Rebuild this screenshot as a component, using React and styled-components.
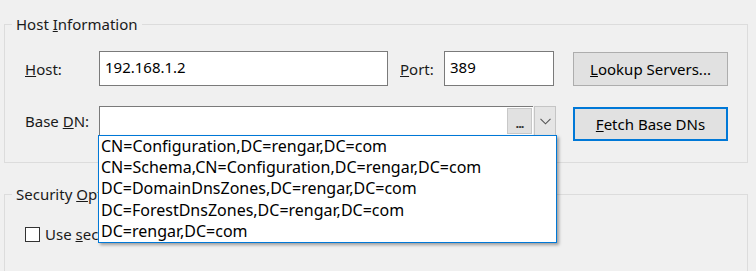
import styled, { createGlobalStyle } from "styled-components";

const GlobalStyle = createGlobalStyle`
    html, body {
        margin: 0;
        background: #f0f0f0;
    }
    body {
        font-family: "Noto Sans", "Open Sans", sans-serif;
        font-size: 15px;
        color: #000;
    }
`;

const baseDns = [
    "CN=Configuration,DC=rengar,DC=com",
    "CN=Schema,CN=Configuration,DC=rengar,DC=com",
    "DC=DomainDnsZones,DC=rengar,DC=com",
    "DC=ForestDnsZones,DC=rengar,DC=com",
    "DC=rengar,DC=com",
];

const Key = ({ text, at = 0 }) => (
    <>
        {text.slice(0, at)}
        <u>{text[at]}</u>
        {text.slice(at + 1)}
    </>
);

const App = () => {
    return (
        <>
            <GlobalStyle />
            <Dialog>
                <Group>
                    <Legend>
                        Host <Key text="Information" />
                    </Legend>
                    <GroupBody $top={17} $bottom={21}>
                        <Row>
                            <Label>
                                <Key text="Host:" />
                            </Label>
                            <TextBox $width={289} readOnly value="192.168.1.2" />
                            <Label $width={44} $gap={12}>
                                <Key text="Port:" />
                            </Label>
                            <TextBox $width={110} readOnly value="389" />
                            <Button $gap={19}>
                                <Key text="Lookup Servers..." />
                            </Button>
                        </Row>
                        <Row $align="flex-start">
                            <Label $height={30}>
                                Base <Key text="DN:" />
                            </Label>
                            <Combo>
                                <ComboField>
                                    <BrowseButton>...</BrowseButton>
                                </ComboField>
                                <ArrowButton>
                                    <svg width="11" height="7" viewBox="0 0 11 7">
                                        <path
                                            d="M0.5 0.8 L5.5 5.8 L10.5 0.8"
                                            fill="none"
                                            stroke="#555"
                                            strokeWidth="1.1"
                                        />
                                    </svg>
                                </ArrowButton>
                                <DropList>
                                    {baseDns.map((dn) => (
                                        <DropItem key={dn}>{dn}</DropItem>
                                    ))}
                                </DropList>
                            </Combo>
                            <Button $gap={17} $focused>
                                <Key text="Fetch Base DNs" />
                            </Button>
                        </Row>
                    </GroupBody>
                </Group>
                <Group $gap={21} $open>
                    <Legend>
                        Security <Key text="Options" />
                    </Legend>
                    <GroupBody $top={20} $bottom={40}>
                        <CheckRow>
                            <CheckBox />
                            <span>
                                Use <Key text="secure connection (SSL)" />
                            </span>
                        </CheckRow>
                    </GroupBody>
                </Group>
            </Dialog>
        </>
    );
};

const Dialog = styled.div`
    padding: 14px 8px 0 4px;
    height: 271px;
    box-sizing: border-box;
    overflow: hidden;
`;

const Group = styled.fieldset`
    margin: ${(p) => p.$gap || 0}px 0 0 0;
    padding: 0;
    border: 1px solid #dcdcdc;
    min-width: 0;
    ${(p) => p.$open && "height: 120px;"}
`;

const Legend = styled.legend`
    margin-left: 7px;
    padding: 0 4px;
    line-height: 20px;
    color: #1a1a1a;
`;

const GroupBody = styled.div`
    padding: ${(p) => p.$top}px 0 ${(p) => p.$bottom}px 20px;
    display: flex;
    flex-direction: column;
    gap: 20px;
`;

const Row = styled.div`
    display: flex;
    align-items: ${(p) => p.$align || "center"};
`;

const Label = styled.label`
    width: ${(p) => p.$width || 74}px;
    margin-left: ${(p) => p.$gap || 0}px;
    flex-shrink: 0;
    white-space: nowrap;
    line-height: ${(p) => p.$height || 20}px;
    color: #1a1a1a;
`;

const TextBox = styled.input`
    width: ${(p) => p.$width}px;
    height: 35px;
    box-sizing: border-box;
    border: 1px solid #7a7a7a;
    background: #fff;
    padding: 0 5px 3px;
    font: inherit;
    color: #000;
    outline: none;
`;

const Button = styled.button`
    margin-left: ${(p) => p.$gap}px;
    margin-top: ${(p) => (p.$focused ? 1 : 0)}px;
    width: 155px;
    height: 34px;
    box-sizing: border-box;
    background: #e1e1e1;
    border: ${(p) => (p.$focused ? "2px solid #0078d7" : "1px solid #adadad")};
    font: inherit;
    color: #000;
    padding: 0;
`;

const Combo = styled.div`
    position: relative;
    display: flex;
    width: 457px;
    height: 30px;
`;

const ComboField = styled.div`
    flex: 1;
    box-sizing: border-box;
    border: 1px solid #7a7a7a;
    border-right: none;
    background: #fff;
    display: flex;
    justify-content: flex-end;
    align-items: center;
    padding-right: 1px;
`;

const BrowseButton = styled.div`
    width: 25px;
    height: 26px;
    box-sizing: border-box;
    border: 1px solid #c8c8c8;
    background: #e1e1e1;
    font-size: 13px;
    font-weight: bold;
    line-height: 28px;
    text-align: center;
    letter-spacing: -1px;
    color: #333;
`;

const ArrowButton = styled.div`
    width: 22px;
    box-sizing: border-box;
    margin-left: 1px;
    border: 1px solid #c5c5c5;
    background: #e5e5e5;
    display: flex;
    align-items: center;
    justify-content: center;
`;

const DropList = styled.ul`
    position: absolute;
    top: 29px;
    left: -1px;
    width: 459px;
    box-sizing: border-box;
    margin: 0;
    padding: 0;
    list-style: none;
    background: #fff;
    border: 1px solid #0078d7;
    box-shadow: 2px 2px 3px rgba(0, 0, 0, 0.35);
    z-index: 2;
`;

const DropItem = styled.li`
    padding-left: 2px;
    font-size: 16px;
    line-height: 21.2px;
    white-space: nowrap;
`;

const CheckRow = styled.div`
    display: flex;
    align-items: center;
    gap: 5px;
    line-height: 20px;
    color: #1a1a1a;
`;

const CheckBox = styled.span`
    width: 15px;
    height: 15px;
    box-sizing: border-box;
    border: 1px solid #333;
    background: #fff;
`;

export default App;
